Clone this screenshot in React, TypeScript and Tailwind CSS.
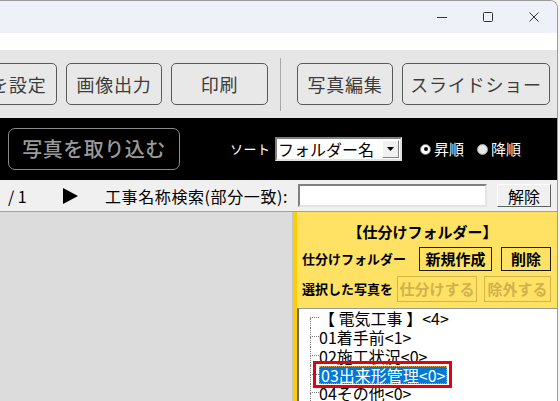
import React from "react";

const jp = { fontFamily: '"Noto Sans CJK JP", "Noto Sans", sans-serif' };

function ToolBtn({ label, className }: { label: string; className: string }) {
  return (
    <div
      className={`h-[42px] flex items-center justify-center shrink-0 rounded-[5px] border border-[#5a5a5a] bg-[#e8e8e8] text-[18px] tracking-[0.8px] text-[#3c3c3c] whitespace-nowrap ${className}`}
    >
      {label}
    </div>
  );
}

function TreeRow({ first, children }: { first?: boolean; children: React.ReactNode }) {
  return (
    <div className="flex h-[18.75px] items-stretch">
      <div className="flex flex-col w-[9px] shrink-0">
        <div
          className={`h-1/2 border-b border-dotted border-[#808080] ${first ? "" : "border-l"}`}
        />
        <div className="h-1/2 border-l border-dotted border-[#808080]" />
      </div>
      <div className="flex items-center text-[16px] leading-[18px] text-black whitespace-nowrap">
        {children}
      </div>
    </div>
  );
}

export default function App() {
  return (
    <div className="w-[560px] h-[401px] overflow-hidden bg-[#f4f4f4]" style={jp}>
      <div className="w-[558px] h-[401px] flex flex-col border-r border-t border-[#9a9a9a] rounded-tr-[8px] overflow-hidden bg-white">
        {/* Title bar */}
        <div className="h-[32px] shrink-0 bg-[#eef2f8] flex justify-end items-center">
          <div className="w-[46px] h-full flex items-center justify-center">
            <svg width="12" height="12" viewBox="0 0 12 12">
              <line x1="1" y1="6.5" x2="11" y2="6.5" stroke="#333" strokeWidth="1" />
            </svg>
          </div>
          <div className="w-[46px] h-full flex items-center justify-center">
            <svg width="12" height="12" viewBox="0 0 12 12">
              <rect x="1.5" y="1.5" width="9" height="9" rx="1" fill="none" stroke="#333" strokeWidth="1" />
            </svg>
          </div>
          <div className="w-[46px] h-full flex items-center justify-center">
            <svg width="12" height="12" viewBox="0 0 12 12">
              <path d="M1.5 1.5 L10.5 10.5 M10.5 1.5 L1.5 10.5" stroke="#333" strokeWidth="1" />
            </svg>
          </div>
        </div>
        {/* White strip */}
        <div className="h-[17px] shrink-0 bg-white" />
        {/* Toolbar */}
        <div className="h-[68px] shrink-0 bg-[#e6e6e6] flex items-center">
          <ToolBtn label="色を設定" className="w-[96px] ml-[-39px]" />
          <ToolBtn label="画像出力" className="w-[96px] ml-[9px]" />
          <ToolBtn label="印刷" className="w-[97px] ml-[9px]" />
          <div className="w-px h-[53px] bg-[#a8a8a8] ml-[12px] shrink-0" />
          <ToolBtn label="写真編集" className="w-[96px] ml-[16px]" />
          <ToolBtn label="スライドショー" className="w-[148px] ml-[9px] tracking-[0.3px]" />
        </div>
        {/* Black bar */}
        <div className="h-[62px] shrink-0 bg-black flex items-center">
          <div className="ml-[8px] w-[172px] h-[42px] rounded-[7px] border border-[#8a8a8a] flex items-center justify-center text-[20px] tracking-[0.5px] font-medium text-[#9a9a9a] whitespace-nowrap">
            写真を取り込む
          </div>
          <div className="ml-[50px] w-[36px] text-[13px] text-white tracking-[0.5px] whitespace-nowrap">ソート</div>
          <div className="ml-[9px] w-[127px] h-[24px] bg-white border-2 border-t-[#808080] border-l-[#808080] border-r-[#e0e0e0] border-b-[#e0e0e0] flex items-center">
            <span className="pl-[1px] text-[16px] leading-[18px] text-black whitespace-nowrap flex-1">フォルダー名</span>
            <div className="w-[17px] h-[18px] mr-[1px] bg-[#f0f0f0] border border-t-white border-l-white border-r-[#808080] border-b-[#808080] flex items-center justify-center">
              <svg width="7" height="4" viewBox="0 0 7 4">
                <path d="M0 0 L7 0 L3.5 4 Z" fill="#000" />
              </svg>
            </div>
          </div>
          <div className="ml-[18px] flex items-center">
            <div className="w-[11px] h-[11px] rounded-full bg-white border border-[#7a7a7a] flex items-center justify-center">
              <div className="w-[4px] h-[4px] rounded-full bg-black" />
            </div>
            <span className="ml-[3px] text-[15px] text-white whitespace-nowrap">昇順</span>
          </div>
          <div className="ml-[13px] flex items-center">
            <div className="w-[11px] h-[11px] rounded-full bg-[#e8e8e8] border border-[#a0a0a0]" />
            <span className="ml-[3px] text-[15px] text-white whitespace-nowrap">降順</span>
          </div>
        </div>
        {/* Search row */}
        <div className="h-[32px] shrink-0 bg-[#f0f0f0] border-b border-[#a0a0a0] flex items-center">
          <span className="ml-[8px] text-[16px] text-black whitespace-nowrap w-[20px]">/ 1</span>
          <svg className="ml-[35px]" width="15" height="16" viewBox="0 0 15 16">
            <path d="M0 0 L15 8 L0 16 Z" fill="#000" />
          </svg>
          <span className="ml-[27px] w-[193px] text-[16px] tracking-[0.6px] text-black whitespace-nowrap">工事名称検索(部分一致):</span>
          <div className="w-[189px] h-[23px] bg-white border-2 border-t-[#808080] border-l-[#808080] border-r-[#e4e4e4] border-b-[#e4e4e4]" />
          <div className="ml-[10px] w-[54px] h-[23px] bg-[#f0f0f0] border border-t-white border-l-white border-r-[#606060] border-b-[#606060] flex items-center justify-center text-[16px] text-black">
            解除
          </div>
        </div>
        {/* Body */}
        <div className="flex-1 flex min-h-0">
          <div className="w-[293px] shrink-0 bg-[#dcdcdc] border-r border-[#c4c4c4]" />
          <div className="w-[4px] shrink-0 bg-[#ffcc00]" />
          <div className="flex-1 flex flex-col min-w-0">
            <div className="h-[96px] shrink-0 bg-[#ffe264] flex flex-col pt-[10px] pl-[5px] pr-[6px]">
              <div className="h-[20px] flex items-center justify-center pr-[8px] text-[15px] font-bold text-black whitespace-nowrap">
                【仕分けフォルダー】
              </div>
              <div className="mt-[5px] flex items-center">
                <span className="text-[13px] font-bold text-black whitespace-nowrap">仕分けフォルダー</span>
                <div className="ml-auto w-[73px] h-[24px] border-[1.5px] border-[#1a1a1a] flex items-center justify-center text-[15px] font-bold text-black">
                  新規作成
                </div>
                <div className="ml-[9px] w-[50px] h-[24px] border-[1.5px] border-[#1a1a1a] flex items-center justify-center text-[15px] font-bold text-black">
                  削除
                </div>
              </div>
              <div className="mt-[5px] flex items-center">
                <span className="text-[13px] font-bold text-black whitespace-nowrap">選択した写真を</span>
                <div className="ml-auto w-[80px] h-[26px] border border-[#d2b548] flex items-center justify-center text-[15px] font-bold text-[#cfb24e]">
                  仕分けする
                </div>
                <div className="ml-[7px] w-[67px] h-[26px] border border-[#d2b548] flex items-center justify-center text-[15px] font-bold text-[#cfb24e]">
                  除外する
                </div>
              </div>
            </div>
            <div className="flex-1 bg-white border-l-2 border-t border-l-[#6a6a6a] border-t-[#9a9a9a] overflow-hidden">
              <div className="ml-[11px]">
                <TreeRow first>【 電気工事 】&lt;4&gt;</TreeRow>
                <TreeRow>01着手前&lt;1&gt;</TreeRow>
                <TreeRow>02施工状況&lt;0&gt;</TreeRow>
                <TreeRow>
                  <span className="relative">
                    <span className="block bg-[#0078d7] text-white px-[1px] h-[18px] leading-[16px] border border-dotted border-[#e8a040]">
                      03出来形管理&lt;0&gt;
                    </span>
                    <span className="absolute -left-[6px] -right-[5px] -top-[5px] -bottom-[4px] border-[3px] border-[#e50012]" />
                  </span>
                </TreeRow>
                <TreeRow>04その他&lt;0&gt;</TreeRow>
              </div>
            </div>
          </div>
        </div>
      </div>
    </div>
  );
}
